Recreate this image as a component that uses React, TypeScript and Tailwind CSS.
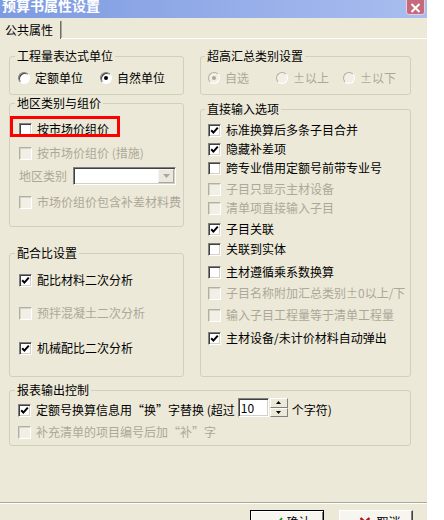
import clsx from "clsx";

const leftRows2 = [
  { label: "按市场价组价 (措施)", on: false, disabled: true },
];

const directRows = [
  { label: "标准换算后多条子目合并", on: true, disabled: false, mt: "mt-[5px]" },
  { label: "隐藏补差项", on: true, disabled: false, mt: "mt-[3px]" },
  { label: "跨专业借用定额号前带专业号", on: false, disabled: false, mt: "mt-[3px]" },
  { label: "子目只显示主材设备", on: false, disabled: true, mt: "mt-[5px]" },
  { label: "清单项直接输入子目", on: false, disabled: true, mt: "mt-[3px]" },
  { label: "子目关联", on: true, disabled: false, mt: "mt-[5px]" },
  { label: "关联到实体", on: false, disabled: false, mt: "mt-[4px]" },
  { label: "主材遵循乘系数换算", on: false, disabled: false, mt: "mt-[7px]" },
  { label: "子目名称附加汇总类别±0以上/下", on: false, disabled: true, mt: "mt-[5px]" },
  { label: "输入子目工程量等于清单工程量", on: false, disabled: true, mt: "mt-[6px]" },
  { label: "主材设备/未计价材料自动弹出", on: true, disabled: false, mt: "mt-[7px]" },
];

function Check({ on, disabled }: { on?: boolean; disabled?: boolean }) {
  return (
    <span
      className={clsx(
        "flex size-[13px] shrink-0 items-center justify-center border",
        disabled
          ? "border-t-[#b2b0a2] border-l-[#b2b0a2] border-r-white border-b-white bg-[#f1efe6] shadow-[inset_1px_1px_0_#d6d4c8]"
          : "border-t-[#808080] border-l-[#808080] border-r-white border-b-white bg-white shadow-[inset_1px_1px_0_#404040,inset_-1px_-1px_0_#d4d0c8]"
      )}
    >
      {on && (
        <svg width="9" height="9" viewBox="0 0 9 9">
          <path d="M1.2 4.2 L3.4 6.6 L7.8 1.6" fill="none" stroke="#000" strokeWidth="2" />
        </svg>
      )}
    </span>
  );
}

function Radio({ on, disabled }: { on?: boolean; disabled?: boolean }) {
  return (
    <span
      className={clsx(
        "flex size-[12px] shrink-0 items-center justify-center rounded-full border",
        disabled
          ? "border-t-[#b2b0a2] border-l-[#b2b0a2] border-r-white border-b-white bg-[#f1efe6]"
          : "border-t-[#808080] border-l-[#808080] border-r-white border-b-white bg-white shadow-[inset_1px_1px_0_#404040]"
      )}
    >
      {on && (
        <span className={clsx("size-[4px] rounded-full", disabled ? "bg-[#aca899]" : "bg-black")} />
      )}
    </span>
  );
}

function CheckRow({
  label,
  on,
  disabled,
  className,
}: {
  label: string;
  on?: boolean;
  disabled?: boolean;
  className?: string;
}) {
  return (
    <div className={clsx("flex h-[16px] items-center gap-[5px] whitespace-nowrap", className)}>
      <Check on={on} disabled={disabled} />
      <span className={disabled ? "text-[#aca899]" : "text-black"}>{label}</span>
    </div>
  );
}

function RadioItem({
  label,
  on,
  disabled,
  className,
}: {
  label: string;
  on?: boolean;
  disabled?: boolean;
  className?: string;
}) {
  return (
    <div className={clsx("flex h-[16px] items-center gap-[5px] whitespace-nowrap", className)}>
      <Radio on={on} disabled={disabled} />
      <span className={disabled ? "text-[#aca899]" : "text-black"}>{label}</span>
    </div>
  );
}

function Group({
  title,
  className,
  children,
}: {
  title: string;
  className?: string;
  children: React.ReactNode;
}) {
  return (
    <fieldset className={clsx("rounded-[3px] border border-[#d0d0bf]", className)}>
      <legend className="px-[2px] leading-[16px]">{title}</legend>
      {children}
    </fieldset>
  );
}

export default function App() {
  return (
    <div className="h-[520px] w-[444px] overflow-hidden bg-white font-['Noto_Sans_CJK_SC',sans-serif] text-[12px] leading-[16px] text-black">
      <div className="flex h-full w-[427px] flex-col bg-[#ece9d8]">
        {/* title bar */}
        <div className="flex h-[18px] shrink-0 items-start justify-between bg-linear-to-r from-[#7e9be1] to-[#a9bdef] pr-[2px]">
          <span className="ml-[2px] mt-[-2px] text-[14px] font-bold leading-[15px] text-white">
            预算书属性设置
          </span>
          <div className="mt-[-3px] flex h-[18px] w-[19px] items-center justify-center rounded-[3px] border border-[#e9d0d8] bg-[#c46a7c] pt-[3px]">
            <svg width="11" height="10" viewBox="0 0 11 10">
              <path d="M1.5 1 L9.5 9 M9.5 1 L1.5 9" stroke="#fff" strokeWidth="2" />
            </svg>
          </div>
        </div>

        {/* tabs */}
        <div className="flex h-[21px] shrink-0 items-end">
          <div className="flex h-[18px] w-[61px] items-center border-r border-r-[#716f64] pl-[5px] shadow-[1px_0_0_#aca899]">
            公共属性
          </div>
          <div className="h-[1px] flex-1 bg-white" />
        </div>

        {/* panel */}
        <div className="flex h-[463px] shrink-0 flex-col pl-[9px] pt-[9px]">
          <div className="flex gap-[16px]">
            {/* left column */}
            <div className="flex w-[175px] flex-col">
              <Group title="工程量表达式单位" className="pb-[8px] pl-[5px]">
                <div className="flex pl-[3px] pt-[6px]">
                  <RadioItem label="定额单位" className="w-[82px]" />
                  <RadioItem label="自然单位" on />
                </div>
              </Group>

              <Group title="地区类别与组价" className="pb-[16px] pl-[5px]">
                <div className="flex flex-col pl-[4px]">
                  <div className="relative mt-[10px]">
                    <CheckRow label="按市场价组价" />
                    <div className="absolute left-[-9px] top-[-5px] h-[21px] w-[110px] border-[3px] border-[#ff0000]" />
                  </div>
                  {leftRows2.map((r) => (
                    <CheckRow key={r.label} label={r.label} disabled={r.disabled} className="mt-[8px]" />
                  ))}
                  <div className="mt-[6px] flex h-[18px] items-center">
                    <span className="w-[54px] text-[#aca899]">地区类别</span>
                    <div className="flex h-[18px] w-[103px] items-center justify-end border border-t-[#808080] border-l-[#808080] border-r-white border-b-white bg-white pr-[1px] shadow-[inset_1px_1px_0_#404040,inset_-1px_-1px_0_#d4d0c8]">
                      <div className="flex h-[14px] w-[16px] items-center justify-center border border-t-[#f5f4ee] border-l-[#f5f4ee] border-r-[#aca899] border-b-[#aca899] bg-[#ebe9df]">
                        <svg width="7" height="4" viewBox="0 0 7 4">
                          <path d="M0 0 H7 L3.5 4 Z" fill="#aca899" />
                        </svg>
                      </div>
                    </div>
                  </div>
                  <CheckRow label="市场价组价包含补差材料费" disabled className="mt-[9px]" />
                </div>
              </Group>

              <Group title="配合比设置" className="mt-[18px] pb-[20px] pl-[5px]">
                <div className="flex flex-col pl-[4px]">
                  <CheckRow label="配比材料二次分析" on className="mt-[11px]" />
                  <CheckRow label="预拌混凝土二次分析" disabled className="mt-[17px]" />
                  <CheckRow label="机械配比二次分析" on className="mt-[19px]" />
                </div>
              </Group>
            </div>

            {/* right column */}
            <div className="flex w-[211px] flex-col">
              <Group title="超高汇总类别设置" className="pb-[8px] pl-[4px]">
                <div className="flex pl-[3px] pt-[6px]">
                  <RadioItem label="自选" on disabled className="w-[68px]" />
                  <RadioItem label="±以上" disabled className="w-[67px]" />
                  <RadioItem label="±以下" disabled />
                </div>
              </Group>

              <Group title="直接输入选项" className="mt-[6px] pb-[30px] pl-[4px]">
                <div className="flex flex-col pl-[3px]">
                  {directRows.map((r) => (
                    <CheckRow key={r.label} label={r.label} on={r.on} disabled={r.disabled} className={r.mt} />
                  ))}
                </div>
              </Group>
            </div>
          </div>

          <Group title="报表输出控制" className="mt-[5px] w-[402px] pb-[5px] pl-[5px]">
            <div className="flex flex-col pl-[3px]">
              <div className="flex h-[20px] items-end whitespace-nowrap">
                <div className="flex h-[16px] items-center gap-[5px]">
                  <Check on />
                  <span>定额号换算信息用“换”字替换 (超过</span>
                </div>
                <div className="mb-[1px] ml-[3px] flex h-[19px] w-[31px] items-center border border-t-[#808080] border-l-[#808080] border-r-white border-b-white bg-white pl-[2px] shadow-[inset_1px_1px_0_#404040,inset_-1px_-1px_0_#d4d0c8]">
                  10
                </div>
                <div className="mb-[1px] ml-[1px] flex h-[19px] w-[18px] flex-col">
                  <div className="flex flex-1 items-center justify-center border border-t-white border-l-white border-r-[#808080] border-b-[#808080] bg-[#ece9d8]">
                    <svg width="5" height="3" viewBox="0 0 5 3">
                      <path d="M0 3 H5 L2.5 0 Z" fill="#000" />
                    </svg>
                  </div>
                  <div className="flex flex-1 items-center justify-center border border-t-white border-l-white border-r-[#808080] border-b-[#808080] bg-[#ece9d8]">
                    <svg width="5" height="3" viewBox="0 0 5 3">
                      <path d="M0 0 H5 L2.5 3 Z" fill="#000" />
                    </svg>
                  </div>
                </div>
                <span className="ml-[4px]">个字符)</span>
              </div>
              <CheckRow label="补充清单的项目编号后加“补”字" disabled className="mt-[6px]" />
            </div>
          </Group>
        </div>

        {/* divider */}
        <div className="h-[2px] shrink-0 border-t border-t-[#aca899] border-b border-b-white" />

        {/* buttons */}
        <div className="flex justify-end gap-[15px] pr-[14px] pt-[6px]">
          <button className="flex h-[23px] w-[74px] items-center justify-center gap-[3px] border border-black bg-[#f6f5f0] pl-[10px] shadow-[inset_1px_1px_0_#fff,inset_-1px_-1px_0_#808080]">
            <svg width="10" height="9" viewBox="0 0 10 9">
              <path d="M1 5 L3.5 8 L9 1" fill="none" stroke="#1f8f2a" strokeWidth="2" />
            </svg>
            <span>确认</span>
          </button>
          <button className="flex h-[23px] w-[74px] items-center justify-center gap-[5px] border border-t-white border-l-white border-r-[#404040] border-b-[#404040] bg-[#f6f5f0] pl-[8px] shadow-[inset_-1px_-1px_0_#808080]">
            <svg width="12" height="10" viewBox="0 0 12 10">
              <path d="M1.5 1 L10 9 M10.5 1 L2 9" stroke="#b0141c" strokeWidth="2.4" />
            </svg>
            <span>取消</span>
          </button>
        </div>
      </div>
    </div>
  );
}
